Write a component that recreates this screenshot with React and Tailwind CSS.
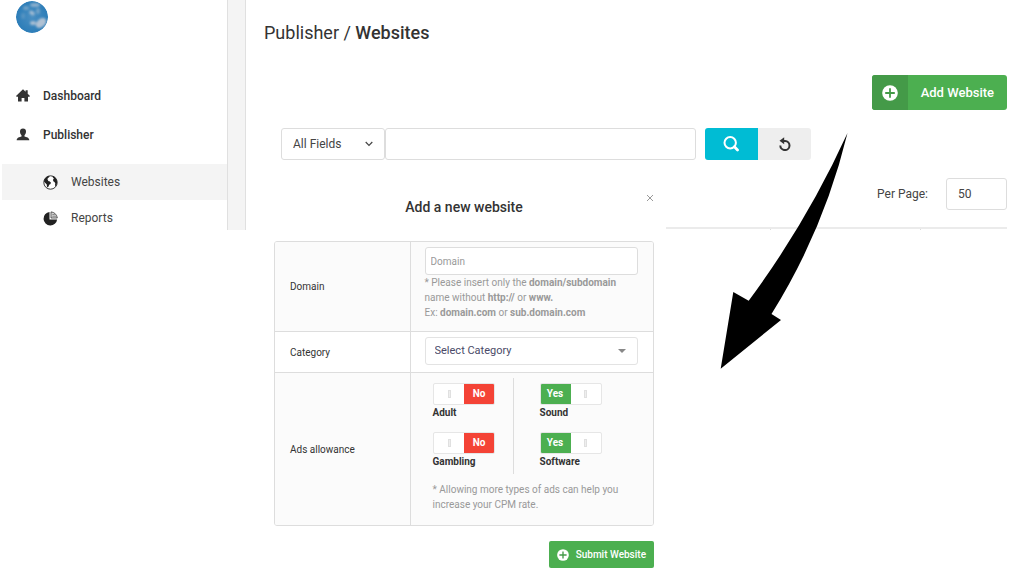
import { useState } from "react";

function PlusCircle({ className }) {
  return (
    <svg viewBox="0 0 16 16" className={className}>
      <circle cx="8" cy="8" r="7.8" fill="currentColor" />
      <path d="M8 3.2v9.6M3.2 8h9.6" stroke="#449a48" strokeWidth="1.8" />
    </svg>
  );
}

function HomeIcon() {
  return (
    <svg viewBox="0 0 14 13" className="w-3.5 h-[13px]" fill="currentColor">
      <path d="M7 .2 0 7.1l.6.6H2V12.6h3.6V8.9h2.8v3.7H12V7.7h1.4l.6-.6-2.3-2.3V1.2H9.6v1.6z" />
    </svg>
  );
}

function UserIcon() {
  return (
    <svg viewBox="0 0 14 13" className="w-3.5 h-[13px]" fill="currentColor">
      <path d="M7 .5c2 0 3 1.2 3 3.1 0 1.7-.7 3-1.5 3.7v1.3c1.9.5 4.8 1.2 4.8 3.7H.7c0-2.5 2.9-3.2 4.8-3.7V7.3C4.7 6.6 4 5.3 4 3.6 4 1.7 5 .5 7 .5z" />
    </svg>
  );
}

function GlobeIcon() {
  return (
    <svg viewBox="0 0 15 15" className="size-[15px]" fill="currentColor">
      <circle cx="7.5" cy="7.5" r="6.7" fill="#fff" stroke="currentColor" strokeWidth=".9" />
      <path d="M1 6C1.400 3.500 3.500 1.300 6 .9l.6.8-1.500 1.200-.9 1.300 1.100.8-.4 1 1.500.3 1.500 1.200-.4 1.500-1.300.8-.7 1.700-.9.900-.7-1-.1-1.900-1.500-1.400L1.300 7z" />
      <path d="M9.500 1l1.200.3c2 1.100 3.400 3.300 3.400 5.800 0 1.800-.6 3.200-1.600 4.400l-.5-1.500.3-1.500-.8-1.500-1.200-.7-.3-1.500.9-1.200-1-1z" />
    </svg>
  );
}

function PieIcon() {
  return (
    <svg viewBox="0 0 15 15" className="size-[15px]" fill="currentColor">
      <path d="M6.500 1v7.400h7.600A6.800 6.800 0 1 1 6.500 1z" />
      <path d="M8 .9v6.100h6.300A6.700 6.700 0 0 0 8 .9z" fill="#ddd" stroke="currentColor" strokeWidth=".7" />
      <path d="M9.300 3.400h2.500M9.300 5.200h3.800" stroke="currentColor" strokeWidth=".5" />
    </svg>
  );
}

function SearchIcon() {
  return (
    <svg viewBox="0 0 16 16" className="size-4" fill="none" stroke="currentColor">
      <circle cx="7.2" cy="6.8" r="5.7" strokeWidth="2" />
      <path d="M11.4 10.8l3.1 3.1" strokeWidth="2.8" strokeLinecap="round" />
    </svg>
  );
}

function ResetIcon() {
  return (
    <svg viewBox="0 0 14 14" className="ml-0.5 size-3.5" fill="none" stroke="currentColor">
      <path d="M5 3.9h2.1a4.600 4.600 0 1 1-4.800 4.500" strokeWidth="2" />
      <path d="M6.2.3v7L1.5 3.8z" fill="currentColor" stroke="none" />
    </svg>
  );
}

function Logo() {
  return (
    <svg viewBox="0 0 32 32" className="size-8">
      <defs>
        <radialGradient id="sky">
          <stop offset="0" stopColor="#4a8fc2" />
          <stop offset="1" stopColor="#2c7db8" />
        </radialGradient>
        <filter id="soft">
          <feGaussianBlur stdDeviation=".9" />
        </filter>
        <clipPath id="disc">
          <circle cx="16" cy="16" r="16" />
        </clipPath>
      </defs>
      <g clipPath="url(#disc)">
        <circle cx="16" cy="16" r="16" fill="url(#sky)" />
        <g filter="url(#soft)" fill="#c5cdd8">
          <ellipse cx="19" cy="4" rx="5" ry="2" opacity=".6" />
          <ellipse cx="10" cy="7" rx="3" ry="2" opacity=".4" />
          <ellipse cx="16" cy="12" rx="3" ry="2" transform="rotate(30 16 12)" opacity=".7" />
          <ellipse cx="22" cy="10" rx="2" ry="3" opacity=".4" />
          <ellipse cx="25" cy="22" rx="6" ry="4" transform="rotate(-40 25 22)" opacity=".85" />
          <ellipse cx="17" cy="22" rx="3" ry="2" opacity=".8" />
          <ellipse cx="7" cy="15" rx="2" ry="3" opacity=".2" />
        </g>
      </g>
    </svg>
  );
}

function Toggle({ label, checked, onChange }) {
  return (
    <label className="block w-16 cursor-pointer">
      <input type="checkbox" className="sr-only" checked={checked} onChange={onChange} />
      <span className="flex w-[62px] h-[22px] rounded-xs overflow-hidden border border-[#e6e6e6] bg-white">
        {checked && <span className="w-[31px] -m-px bg-[#4caf50] text-white font-bold text-center leading-[22px]">Yes</span>}
        <span className="flex-1 flex items-center justify-center">
          <span className="w-[3px] h-2 border border-[#e0e0e0] bg-[#eee]" />
        </span>
        {!checked && <span className="w-[31px] -m-px bg-[#f44336] text-white font-bold text-center leading-[22px]">No</span>}
      </span>
      <span className="block leading-4 font-bold text-[#333]">{label}</span>
    </label>
  );
}

export default function App() {
  const [allow, setAllow] = useState({
    adult: false,
    gambling: false,
    sound: true,
    software: true,
  });

  const toggle = (key) => setAllow({ ...allow, [key]: !allow[key] });

  return (
    <div className="relative min-h-screen bg-white font-['Roboto',sans-serif] text-[13px] text-[#333]">
      <div className="flex">

        {/* Sidebar */}
        <aside className="w-[227px] shrink-0 pl-0.5 pt-px">
          <div className="pl-3.5">
            <Logo />
          </div>

          <nav className="pt-[43px] text-xs">
            <a href="#dashboard" className="flex items-center gap-[13px] h-[39px] pl-3.5 font-medium">
              <HomeIcon />
              Dashboard
            </a>
            <a href="#publisher" className="flex items-center gap-[13px] h-[39px] pl-3.5 font-medium">
              <UserIcon />
              Publisher
            </a>
            <div className="pt-2.5 leading-5 text-[#444]">
              <a href="#websites" className="flex items-center gap-[13px] py-2 pl-[41px] bg-[#f4f4f4]">
                <span className="text-[#222]"><GlobeIcon /></span>
                Websites
              </a>
              <a href="#reports" className="flex items-center gap-[13px] pt-2 pb-0.5 pl-[41px]">
                <span className="text-[#222]"><PieIcon /></span>
                Reports
              </a>
            </div>
          </nav>
        </aside>

        <div className="w-[19px] shrink-0 bg-[#f4f4f4] border-x border-[#e0e0e0]" />

        {/* Page */}
        <main className="flex-1 min-w-0 pl-[18px] pr-0.5 pt-[21px]">
          <h1 className="text-lg leading-6">
            Publisher / <span className="font-medium">Websites</span>
          </h1>

          <div className="flex justify-end pt-[30px]">
            <button className="flex items-center h-[35px] rounded-[3px] overflow-hidden bg-[#4caf50] text-white font-medium">
              <span className="w-9 h-full flex items-center justify-center bg-[#449a48]">
                <PlusCircle className="size-4" />
              </span>
              <span className="px-[13px]">Add Website</span>
            </button>
          </div>

          <div className="pl-[17px] pt-[18px]">
            <form className="flex w-[73%] h-8" onSubmit={(e) => e.preventDefault()}>
              <div className="relative w-[104px] shrink-0">
                <select aria-label="Search field" className="appearance-none w-full h-full pl-[11px] border border-[#ddd] rounded-[3px] text-xs text-[#444]">
                  <option>All Fields</option>
                </select>
                <svg viewBox="0 0 8 6" className="absolute right-3 top-[13px] w-2 h-1.5 pointer-events-none" fill="none" stroke="#444" strokeWidth="1.2">
                  <path d="M.7 1 4 4.3 7.3 1" />
                </svg>
              </div>
              <input type="text" aria-label="Search" className="flex-1 min-w-0 px-3 border border-[#ddd] rounded-[3px]" />
              <button aria-label="Search" className="ml-[9px] w-[53px] flex items-center justify-center rounded-l-[3px] bg-[#00bcd4] text-white">
                <SearchIcon />
              </button>
              <button type="reset" aria-label="Reset" className="w-[53px] flex items-center justify-center rounded-r-[3px] bg-[#eee]">
                <ResetIcon />
              </button>
            </form>
          </div>

          <label className="flex items-center justify-end gap-[18px] pt-[18px] pb-[17px] text-xs text-[#444]">
            Per Page:
            <input type="text" defaultValue="50" className="w-[61px] h-8 px-[11px] border border-[#ddd] rounded-[3px]" />
          </label>

          {/* Top edge of the website list */}
          <div className="flex h-[3px] border-t-2 border-[#ebebeb]">
            <div className="flex-1 border-r border-[#ddd]" />
            <div className="w-[150px] border-r border-[#ddd]" />
            <div className="w-[86px]" />
          </div>
        </main>
      </div>

      {/* Add website dialog */}
      <div role="dialog" aria-labelledby="dialog-title" className="absolute left-[262px] top-[188px] w-[404px] px-3 pb-[5px] bg-white text-[10px]">
        <button aria-label="Close" className="float-right size-2 mt-1.5 text-[#999]">
          <svg viewBox="0 0 8 8" className="size-2" stroke="currentColor" strokeWidth="1">
            <path d="M1 1l6 6M7 1 1 7" />
          </svg>
        </button>
        <h2 id="dialog-title" className="pt-[9px] pb-6 pl-2 text-center text-sm leading-5 font-medium">
          Add a new website
        </h2>

        <form onSubmit={(e) => e.preventDefault()}>
          <div className="border border-[#ddd] rounded-[3px] overflow-hidden">
            <table className="w-full table-fixed border-collapse">
              <tbody>
                <tr className="bg-[#fbfbfb] border-b border-[#ddd]">
                  <th scope="row" className="w-[135px] px-[15px] text-left font-normal border-r border-[#ddd]">
                    <label htmlFor="domain">Domain</label>
                  </th>
                  <td className="pl-3.5 pr-[15px] pt-[5px] pb-[11px] text-[#999]">
                    <input id="domain" type="text" placeholder="Domain" className="block w-full h-7 px-[5px] bg-white border border-[#ddd] rounded-[3px] placeholder:text-[#999]" />
                    <p className="leading-[15px]">
                      * Please insert only the <b>domain/subdomain</b>
                      <br />
                      name without <b>http://</b> or <b>www.</b>
                      <br />
                      Ex: <b>domain.com</b> or <b>sub.domain.com</b>
                    </p>
                  </td>
                </tr>
                <tr className="border-b border-[#ddd]">
                  <th scope="row" className="px-[15px] text-left font-normal border-r border-[#ddd]">
                    <label htmlFor="category">Category</label>
                  </th>
                  <td className="pl-3.5 pr-[15px] pt-[5px] pb-[7px]">
                    <div className="relative">
                      <select id="category" className="appearance-none block w-full h-7 px-[9px] border border-[#e3e3e3] rounded-[3px] text-[11px] text-[#4a4a68]">
                        <option>Select Category</option>
                      </select>
                      <svg viewBox="0 0 8 4" className="absolute right-3 top-3 w-2 h-1 pointer-events-none" fill="#888">
                        <path d="M0 0h8L4 4z" />
                      </svg>
                    </div>
                  </td>
                </tr>
                <tr className="bg-[#fbfbfb]">
                  <th scope="row" className="px-[15px] text-left font-normal border-r border-[#ddd]">
                    Ads allowance
                  </th>
                  <td className="pl-[22px] pr-[15px] pt-[5px] pb-[13px]">
                    <div className="flex">
                      <div className="w-[81px] pt-[5px] pb-1 flex flex-col gap-[11px] border-r border-[#ddd]">
                        <Toggle label="Adult" checked={allow.adult} onChange={() => toggle("adult")} />
                        <Toggle label="Gambling" checked={allow.gambling} onChange={() => toggle("gambling")} />
                      </div>
                      <div className="pl-[26px] pt-[5px] pb-1 flex flex-col gap-[11px]">
                        <Toggle label="Sound" checked={allow.sound} onChange={() => toggle("sound")} />
                        <Toggle label="Software" checked={allow.software} onChange={() => toggle("software")} />
                      </div>
                    </div>
                    <p className="pt-2 leading-[15px] text-[#999]">
                      * Allowing more types of ads can help you
                      <br />
                      increase your CPM rate.
                    </p>
                  </td>
                </tr>
              </tbody>
            </table>
          </div>

          <div className="flex justify-end pt-[15px]">
            <button className="flex items-center gap-[7px] h-[27px] px-2 rounded-xs bg-[#4caf50] text-white font-medium">
              <PlusCircle className="size-3" />
              Submit Website
            </button>
          </div>
        </form>
      </div>

      {/* Arrow from the add button to the dialog */}
      <svg viewBox="0 0 128 238" className="absolute right-[161px] top-[132px] w-32 h-[238px] pointer-events-none">
        <path d="M127.5 1Q104 98 51.5 182L61 188 .7 236.700 13.300 160l15.400 8.700Q87 90 127.500 1z" />
      </svg>
    </div>
  );
}
